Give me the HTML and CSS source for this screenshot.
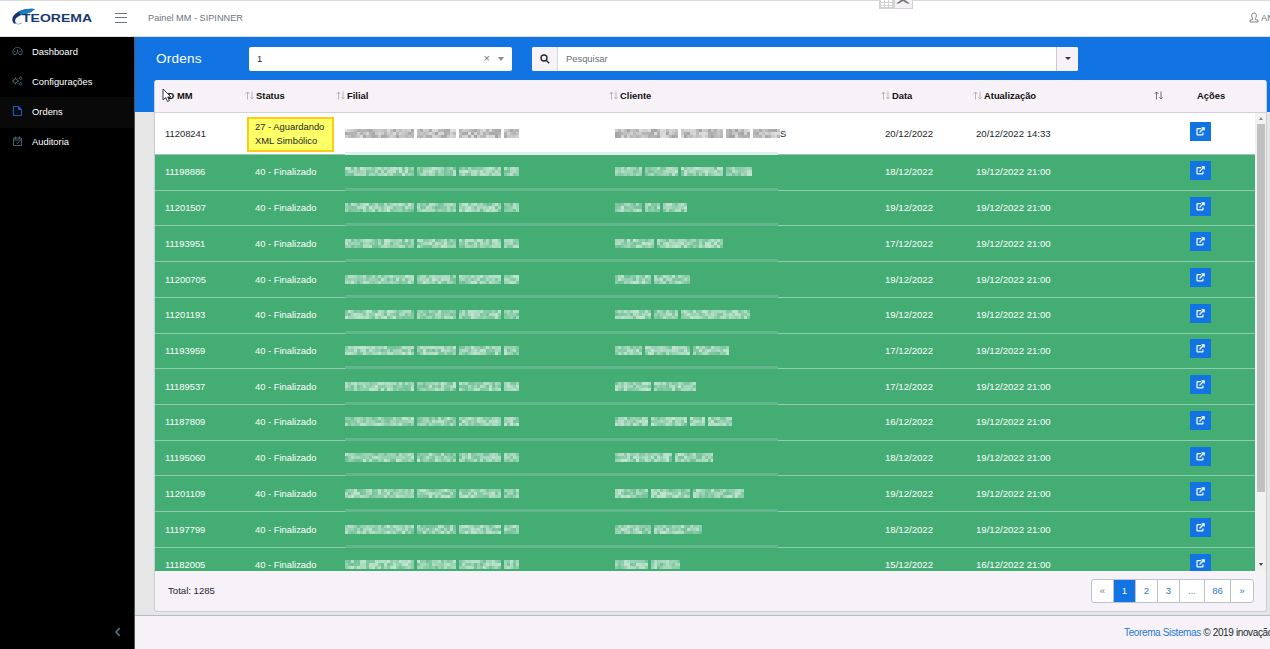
FILE: index.html
```html
<!DOCTYPE html>
<html lang="pt-BR">
<head>
  <meta charset="UTF-8" />
  <meta name="viewport" content="width=device-width, initial-scale=1.0"/>
  <title>Painel MM - SIPINNER</title>
  <link rel="stylesheet" href="styles.css">
</head>
<body>
  <header class="topbar">
    <svg class="logo" width="84" height="20" viewBox="0 0 84 20">
      <path d="M24 1Q11 0 4 6Q-1 11 3 15.500Q5 16 5 15Q2 11 9 7.500Q15 6 20 4Z" fill="#15356f"/>
      <path d="M24 1Q14 0 8 4L10 7Q16 6 20 4Z" fill="#1b7cc4"/>
      <path d="M4 15Q7 17.500 11 15" fill="none" stroke="#8b9bb5" stroke-width=".8"/>
      <text x="11" y="14" textLength="70" lengthAdjust="spacingAndGlyphs">TEOREMA</text>
    </svg>
    <span class="menu-toggle"><i></i><i></i><i></i></span>
    <span class="app-name">Painel MM - SIPINNER</span>
    <span class="user">
      <svg width="10" height="11" viewBox="0 0 10 11" fill="none" stroke="#6f747c" stroke-width=".9"><path d="M3.700 6.800C2.300 5 2 1 5 1s2.700 4 1.300 5.800v.7L9 8.300V10H1V8.300l2.700-.8z"/></svg>
      AN
    </span>
    <div class="recorder-tab">
      <svg width="34" height="9" viewBox="0 0 34 9">
        <rect width="34" height="9" fill="#d2d2d2"/>
        <rect x="16" width="17" height="8" fill="#f4f1f5"/>
        <path d="M2 0h3v2H2zM6 0h3v2H6zM10 0h3v2h-3zM2 3h3v2H2zM6 3h3v2H6zM10 3h3v2h-3zM2 6h3v1H2zM6 6h3v1H6zM10 6h3v1h-3z" fill="#fff"/>
        <path d="M17 3.500L22 0h4l5 3.500h-3L24 1l-4 2.500z" fill="#777"/>
      </svg>
    </div>
  </header>

  <div class="shell">
    <nav class="sidebar">
      <a class="nav-item">
        <svg width="11" height="10" viewBox="0 0 11 10" fill="none" stroke="#47606c"><path d="M1.500 8.500C-.5 4 2.500 1.500 5.500 1.500s6 2.500 4 7H7.200L5.500 6 4 8.500zM5.500 6V3.500M2 5.500h1.500M7.500 5.500H9"/></svg>
        Dashboard
      </a>
      <a class="nav-item">
        <svg width="11" height="10" viewBox="0 0 11 10" fill="none" stroke="#47606c"><circle cx="3.500" cy="5" r="2"/><path d="M3.500 1.500V3M3.500 7v1.500M0 5h1.500M5.500 5H7M1 2.500l1 1M6 2.500l-1 1M1 7.500l1-1M6 7.500l-1-1"/><circle cx="8.700" cy="2.200" r="1.200"/><circle cx="8.700" cy="7.800" r="1.200"/></svg>
        Configurações
      </a>
      <a class="nav-item active">
        <svg width="11" height="12" viewBox="0 0 11 12" fill="none" stroke="#1c58b4" stroke-width="1.200"><path d="M1.500 1.500h5l3 3v6h-8zM6.500 1.500v3h3"/></svg>
        Ordens
      </a>
      <a class="nav-item">
        <svg width="11" height="11" viewBox="0 0 11 11" fill="none" stroke="#47606c"><path d="M1.500 2h8v7.500h-8zM1.500 4h8M3.500.5V3M7.500.5V3M4 6.500l1.200 1.200L7.500 5.500"/></svg>
        Auditoria
      </a>
      <span class="collapse"><svg width="7" height="10" viewBox="0 0 7 10" fill="none" stroke="#54717e" stroke-width="1.700"><path d="M5.700 1L2 5l3.700 4"/></svg></span>
    </nav>

    <div class="page">
      <main class="content">
        <div class="toolbar">
          <h1>Ordens</h1>
          <div class="select">
            <span class="select-value">1</span>
            <span class="clear">×</span>
            <span class="caret"></span>
          </div>
          <div class="search">
            <span class="search-icon"><svg width="10" height="10" viewBox="0 0 10 10" fill="none" stroke="#222b30" stroke-width="1.400"><circle cx="4" cy="4" r="3"/><path d="M6.200 6.200L9.200 9.200"/></svg></span>
            <span class="search-field">Pesquisar</span>
            <span class="search-drop"><span class="caret dark"></span></span>
          </div>
        </div>

        <section class="card">
          <div class="table-head" id="head"></div>
          <div class="table-wrap">
            <div class="table-body" id="rows"></div>
            <div class="scrollbar"><span class="arrow up"></span><span class="thumb"></span><span class="arrow down"></span></div>
          </div>
          <div class="card-foot">
            <span>Total: 1285</span>
            <div class="pager">
              <span class="muted">«</span><span class="current">1</span><span>2</span><span>3</span><span class="muted dots">...</span><span class="wide">86</span><span>»</span>
            </div>
          </div>
        </section>
      </main>
      <footer class="footer"><a>Teorema Sistemas</a> © 2019 inovação</footer>
    </div>
  </div>
  <svg class="cursor" width="12" height="15" viewBox="0 0 12 15"><path d="M1 1v11l2.700-2.500L5.500 13.500l2-1L5.700 9H9z" fill="#fff" stroke="#222" stroke-width=".9"/></svg>
  <script src="script.js"></script>
</body>
</html>
```
FILE: styles.css
```css
* {
  box-sizing: border-box;
}
body {
  margin: 0;
  height: 649px;
  overflow: hidden;
  display: flex;
  flex-direction: column;
  font-family: "Liberation Sans", Arial, sans-serif;
  font-size: 9.4px;
  color: #23282c;
}
.topbar {
  position: relative;
  flex: none;
  height: 37px;
  display: flex;
  align-items: center;
  padding: 0 0 2px 11px;
  background: #fff;
  border-top: 1px solid #d9d9d9;
  border-bottom: 1px solid #dde1e6;
  white-space: nowrap;
}
.logo text {
  font-size: 11.5px;
  font-weight: bold;
  fill: #1b3a70;
}
.menu-toggle {
  display: flex;
  flex-direction: column;
  gap: 3.5px;
  width: 12px;
  margin-left: 20px;
}
.menu-toggle i {
  height: 1px;
  background: #68777f;
}
.app-name {
  margin-left: 21px;
  color: #6c757d;
  font-size: 9.2px;
}
.user {
  display: flex;
  align-items: center;
  gap: 2px;
  width: 21px;
  margin-left: auto;
  overflow: hidden;
  color: #6c757d;
}
.user svg {
  flex: none;
}
.recorder-tab {
  position: absolute;
  left: 879px;
  top: -1px;
  height: 9px;
  line-height: 0;
}
.shell {
  flex: 1;
  display: flex;
  min-height: 0;
}
.sidebar {
  flex: none;
  width: 135px;
  display: flex;
  flex-direction: column;
  background: #000;
  border-right: 1px solid #555;
}
.nav-item {
  display: flex;
  align-items: center;
  gap: 9px;
  height: 30.2px;
  padding: 0 0 2px 12px;
  color: #fff;
}
.nav-item.active {
  background: #090909;
}
.nav-item svg {
  flex: none;
}
.collapse {
  margin: auto 13px 12px auto;
  line-height: 0;
}
.page {
  flex: 1;
  min-width: 0;
  display: flex;
  flex-direction: column;
}
.content {
  height: 578px;
  padding: 0 3px 0 19px;
  background: linear-gradient(#1174e2 75px, #e6e6e6 75px);
}
.toolbar {
  height: 43px;
  display: flex;
  align-items: center;
}
h1 {
  width: 95px;
  margin: 0;
  padding-left: 2px;
  font-size: 13.6px;
  font-weight: normal;
  letter-spacing: .2px;
  color: #fff;
}
.select {
  display: flex;
  align-items: center;
  width: 263px;
  height: 24px;
  padding: 0 8px;
  background: #fff;
  border-radius: 2px;
}
.clear {
  margin: -2px 8px 0 auto;
  font-size: 11px;
  color: #777;
}
.caret {
  border: 3px solid transparent;
  border-top: 4px solid #888;
  border-bottom: 0;
}
.caret.dark {
  border-top: 3px solid #333;
}
.search {
  display: flex;
  width: 546px;
  height: 24px;
  margin-left: 20px;
  border-radius: 2px;
  overflow: hidden;
  background: #fff;
}
.search-icon,
.search-drop {
  display: flex;
  align-items: center;
  justify-content: center;
  width: 26px;
  background: #f6f2f7;
  border-right: 1px solid #d5d8de;
}
.search-drop {
  width: 22px;
  border-right: 0;
  border-left: 1px solid #c8ccd2;
}
.search-field {
  flex: 1;
  padding-left: 8px;
  line-height: 24px;
  color: #66717a;
}
.card {
  height: 532px;
  background: #f6f2f7;
  border: 1px solid #c8ced3;
  border-top: 0;
  border-radius: 3px;
}
.table-head {
  display: grid;
  grid-template-columns: 90px 91px 273px 272px 92px 181px 1fr;
  align-items: center;
  height: 33px;
  padding-bottom: 2px;
  border-bottom: 1px solid #d0d4da;
  font-weight: bold;
  color: #111;
}
.th {
  display: flex;
  align-items: center;
  gap: 2px;
}
.th:first-child {
  padding-left: 10px;
}
.th:last-child {
  gap: 34px;
}
.sort {
  opacity: .35;
}
.sort.sorted {
  opacity: .75;
}
.table-wrap {
  display: flex;
  height: 458px;
  overflow: hidden;
}
.table-body {
  flex: 1;
  background: #fff;
}
.row {
  position: relative;
  display: grid;
  grid-template-columns: 90px 90px 270px 270px 91px 214px 1fr;
  align-items: center;
  height: 35.73px;
  padding-bottom: 1px;
  background: #43ad73;
  border-bottom: 1px solid #8fcdac;
  color: #fff;
}
.row > span {
  padding-left: 10px;
}
.row.waiting {
  height: 42px;
  background: #fff;
  color: #23282c;
}
.date {
  font-size: 9.6px;
}
.row .status-tag {
  width: 87px;
  height: 35px;
  margin: 2px 0 0 2px;
  padding: 1px 0 0 6px;
  line-height: 14px;
  background: #ffff66;
  border: 2px solid #ffca1a;
  white-space: nowrap;
}
/* mosaic strip over the private columns */
.row::after {
  content: "";
  position: absolute;
  left: 190px;
  bottom: -1px;
  width: 433px;
  height: 3px;
  background: #63b58b;
}
.row.waiting::after {
  background: #dff0e8;
}
.row > .masked {
  display: flex;
  align-items: center;
}
.masked svg {
  flex: none;
}
.edit {
  display: flex;
  align-items: center;
  justify-content: center;
  width: 21px;
  height: 19px;
  margin: -3px 0 0 10px;
  background: #1174e2;
}
.scrollbar {
  display: flex;
  flex-direction: column;
  align-items: center;
  width: 11px;
  background: #f1f1f1;
}
.thumb {
  width: 8px;
  height: 368px;
  margin-top: 4px;
  background: #c1c1c3;
}
.arrow {
  border: 2.5px solid transparent;
}
.arrow.up {
  margin-top: 4px;
  border-top: 0;
  border-bottom: 3px solid #888;
}
.arrow.down {
  margin: auto 0 5px;
  border-bottom: 0;
  border-top: 3px solid #444;
}
.card-foot {
  display: flex;
  align-items: center;
  justify-content: space-between;
  height: 39px;
  padding: 0 12px 0 13px;
  font-size: 9.6px;
}
.pager {
  display: flex;
  height: 24px;
  border: 1px solid #bac3cb;
  border-radius: 3px;
  background: #fff;
  color: #2879d4;
}
.pager span {
  display: flex;
  align-items: center;
  justify-content: center;
  width: 22px;
  border-right: 1px solid #bac3cb;
}
.pager span:last-child {
  border-right: 0;
}
.pager .muted {
  color: #777;
}
.pager .dots {
  width: 25px;
}
.pager .wide {
  width: 26px;
}
.pager .current {
  background: #1174e2;
  color: #fff;
}
.footer {
  flex: 1;
  border-top: 1px solid #b2bccb;
  padding: 11px 0 0 989px;
  background: #f6f2f7;
  font-size: 10px;
  letter-spacing: -.37px;
  white-space: nowrap;
  overflow: hidden;
}
.footer a {
  color: #2879d4;
}
.cursor {
  position: absolute;
  left: 162px;
  top: 88px;
}
```
FILE: script.js
```javascript
const columns = ['ID MM', 'Status', 'Filial', 'Cliente', 'Data', 'Atualização', 'Ações'];

// id, word widths of the masked client, date, last update
const orders = [
  ['11208241', [63, 42, 24, 27], '20/12/2022', '20/12/2022 14:33'],
  ['11198886', [27, 33, 42, 26], '18/12/2022', '19/12/2022 21:00'],
  ['11201507', [27, 15, 24], '19/12/2022', '19/12/2022 21:00'],
  ['11193951', [39, 66], '17/12/2022', '19/12/2022 21:00'],
  ['11200705', [36, 36], '19/12/2022', '19/12/2022 21:00'],
  ['11201193', [36, 24, 69], '19/12/2022', '19/12/2022 21:00'],
  ['11193959', [27, 45, 36], '17/12/2022', '19/12/2022 21:00'],
  ['11189537', [36, 42], '17/12/2022', '19/12/2022 21:00'],
  ['11187809', [33, 36, 15, 24], '16/12/2022', '19/12/2022 21:00'],
  ['11195060', [57, 38], '18/12/2022', '19/12/2022 21:00'],
  ['11201109', [33, 39, 51], '19/12/2022', '19/12/2022 21:00'],
  ['11197799', [36, 48], '18/12/2022', '19/12/2022 21:00'],
  ['11182005', [33, 29], '15/12/2022', '16/12/2022 21:00']
];

let seed = 7;
function rand() {
  seed = (seed * 16807) % 2147483647;
  return seed / 2147483647;
}

// block mosaic shown in place of private data
function mosaic(words, color) {
  let x = 0, cells = '';
  for (const w of words) {
    for (let cx = 0; cx < w; cx += 3) {
      for (let cy = 0; cy < 3; cy++) {
        const o = (0.25 + rand() * 0.42).toFixed(2);
        cells += `<rect x="${x + cx}" y="${cy * 3}" width="3" height="3" opacity="${o}"/>`;
      }
    }
    x += w + 3;
  }
  return `<svg width="${x - 3}" height="9" fill="${color}">${cells}</svg>`;
}

const arrows = cls => `<svg class="sort ${cls}" width="9" height="9" viewBox="0 0 9 9" fill="none" stroke="#333" stroke-width=".9"><path d="M2.500 8.500V1M.5 3l2-2 2 2M7 .5V8M5.300 6.300L7 8l1.700-1.700"/></svg>`;

document.getElementById('head').innerHTML = columns.map((name, i) =>
  `<div class="th">${i ? arrows(i === 6 ? 'sorted' : '') : ''}${name}</div>`
).join('');

document.getElementById('rows').innerHTML = orders.map(([id, client, date, updated], i) => {
  const waiting = i === 0;
  const color = waiting ? '#777' : '#fff';
  const status = waiting
    ? '<span class="status-tag">27 - Aguardando<br>XML Simbólico</span>'
    : '<span>40 - Finalizado</span>';
  return `<div class="row${waiting ? ' waiting' : ''}">
    <span>${id}</span>
    ${status}
    <span class="masked">${mosaic([69, 39, 42, 15], color)}</span>
    <span class="masked">${mosaic(client, color)}${waiting ? 'S' : ''}</span>
    <span class="date">${date}</span>
    <span class="date">${updated}</span>
    <div class="edit"><svg width="9" height="9" viewBox="0 0 9 9" fill="none" stroke="#fff" stroke-width="1.200"><path d="M5 1.600H1.600Q1 1.600 1 2.200v5Q1 7.800 1.600 7.800h4.800Q7 7.800 7 7.200V5.500M3.500 5.500L8 1M5.500.8h2.700v2.700"/></svg></div>
  </div>`;
}).join('');
```
